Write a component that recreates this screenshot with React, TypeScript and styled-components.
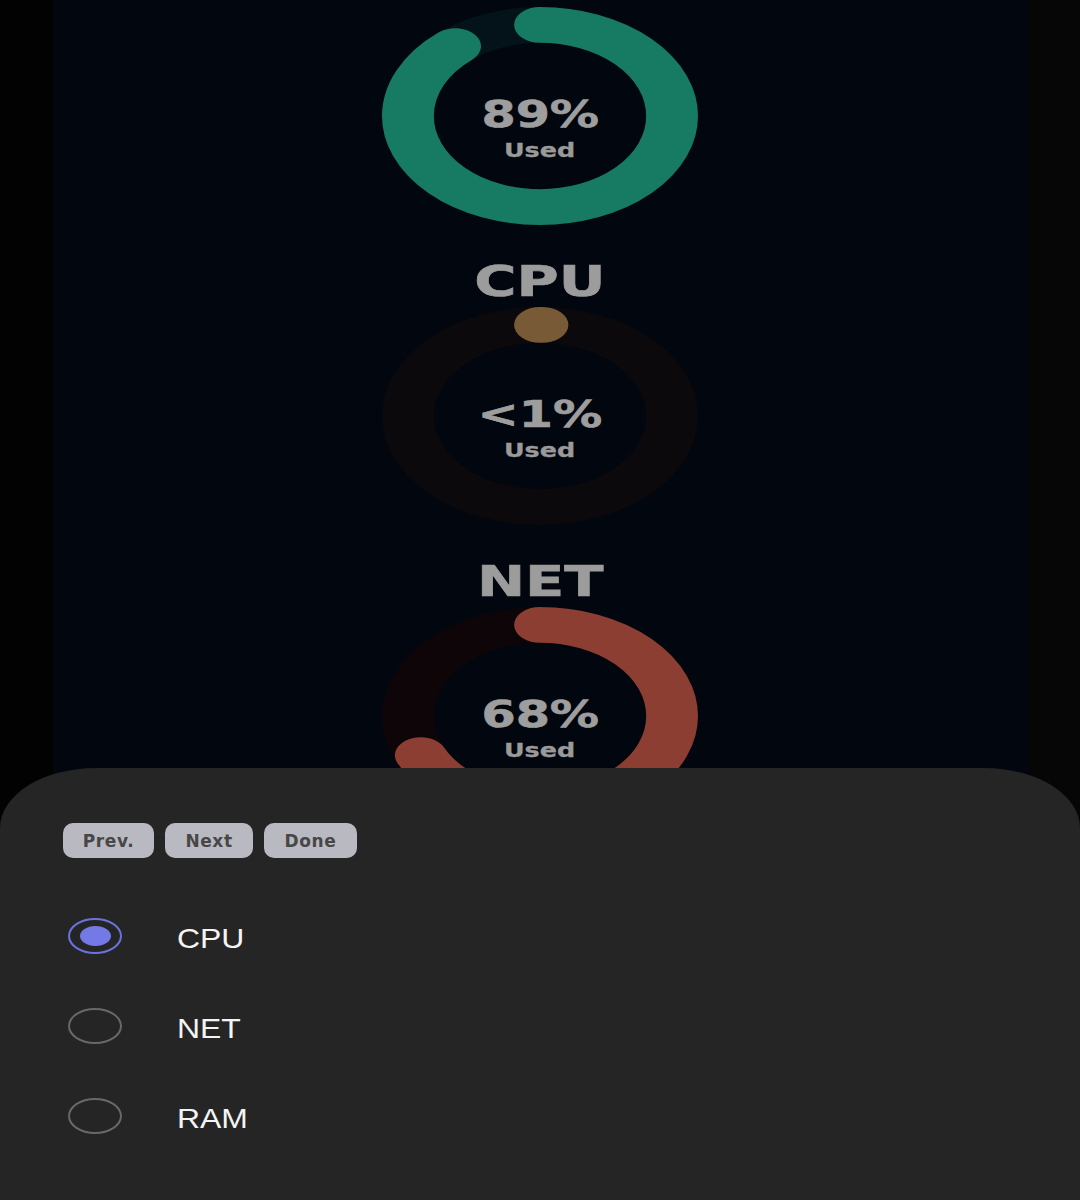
import React from 'react';
import styled, { createGlobalStyle } from 'styled-components';

const GlobalStyle = createGlobalStyle`
  html, body {
    margin: 0;
    padding: 0;
    background: #020202;
    font-family: "DejaVu Sans", "Liberation Sans", sans-serif;
  }
`;

const Screen = styled.div`
  position: relative;
  display: flex;
  width: 1080px;
  height: 1200px;
  overflow: hidden;
`;

const Strip = styled.div<{ tone: string }>`
  width: 53px;
  flex-shrink: 0;
  background: ${p => p.tone};
`;

const Panel = styled.main`
  flex: 1;
  background: #02070f;
  overflow: hidden;
`;

const List = styled.div`
  display: flex;
  flex-direction: column;
  align-items: center;
  padding-top: 7px;
`;

const Section = styled.section`
  display: flex;
  flex-direction: column;
  align-items: center;
`;

const Heading = styled.h2`
  margin: 0;
  padding: 36px 0 4px;
  font-size: 42px;
  line-height: 42px;
  font-weight: 700;
  color: #9c9c9c;
  -webkit-text-stroke: 0.6px #9c9c9c;
  transform: scaleX(1.37);
`;

const Donut = styled.div`
  display: grid;
  width: 316px;
  height: 218px;

  & > * {
    grid-area: 1 / 1;
  }

  svg {
    width: 100%;
    height: 100%;
  }
`;

const Center = styled.div`
  display: flex;
  flex-direction: column;
  align-items: center;
  justify-content: center;
  padding-top: 24px;
`;

const Value = styled.div`
  font-size: 37px;
  line-height: 40px;
  font-weight: 700;
  color: #9e9e9e;
  -webkit-text-stroke: 0.6px #9e9e9e;
  transform: scaleX(1.33);
`;

const Caption = styled.div`
  margin-top: 4px;
  font-size: 19px;
  line-height: 22px;
  font-weight: 700;
  color: #9a9a9a;
  -webkit-text-stroke: 0.3px #9a9a9a;
  transform: scaleX(1.34);
`;

const Sheet = styled.div`
  position: absolute;
  left: 0;
  right: 0;
  bottom: 0;
  height: 432px;
  background: #252525;
  border-radius: 96px 96px 0 0 / 60px 60px 0 0;
  padding: 55px 0 0 63px;
  box-sizing: border-box;
`;

const Toolbar = styled.div`
  display: flex;
  gap: 11px;
`;

const ToolButton = styled.button<{ w: number }>`
  width: ${p => p.w}px;
  height: 35px;
  border: none;
  border-radius: 10px;
  background: #b9b9c1;
  color: #474747;
  font-family: "DejaVu Sans", sans-serif;
  font-size: 17px;
  font-weight: 700;
  letter-spacing: 0.6px;
  padding: 0;
`;

const Options = styled.div`
  display: flex;
  flex-direction: column;
  margin-top: 33px;
`;

const Option = styled.label`
  display: flex;
  align-items: center;
  height: 90px;
  padding-left: 5px;
`;

const Radio = styled.span<{ checked?: boolean }>`
  display: flex;
  align-items: center;
  justify-content: center;
  width: 54px;
  height: 36px;
  box-sizing: border-box;
  border-radius: 50%;
  border: 2px solid ${p => (p.checked ? '#6b72de' : '#686868')};

  &::after {
    content: '';
    display: ${p => (p.checked ? 'block' : 'none')};
    width: 31px;
    height: 20px;
    border-radius: 50%;
    background: #7479e8;
  }
`;

const OptionText = styled.span`
  margin-left: 55px;
  padding-top: 5px;
  font-family: "Liberation Sans", Arial, sans-serif;
  font-size: 28px;
  color: #f4f4f4;
  transform: scaleX(1.14);
  transform-origin: left center;
`;

interface RingProps {
  value: number;
  color: string;
  track: string;
}

const Ring: React.FC<RingProps> = ({ value, color, track }) => (
  <svg viewBox="0 0 100 100" preserveAspectRatio="none">
    <circle cx="50" cy="50" r="41.8" fill="none" stroke={track} strokeWidth="16.4" />
    <circle
      cx="50"
      cy="50"
      r="41.8"
      fill="none"
      stroke={color}
      strokeWidth="16.4"
      strokeLinecap="round"
      pathLength={100}
      strokeDasharray={`${value} 100`}
      transform="rotate(-90 50 50)"
    />
  </svg>
);

const gauges = [
  { name: 'RAM', label: '89%', value: 89, color: '#177a62', track: '#04131a' },
  { name: 'CPU', label: '<1%', value: 0.3, color: '#785a36', track: '#0b090b' },
  { name: 'NET', label: '68%', value: 68, color: '#8b3e31', track: '#0e0509' },
];

const App: React.FC = () => {
  return (
    <>
      <GlobalStyle />
      <Screen>
        <Strip tone="#020202" />
        <Panel>
          <List>
            {gauges.map((g, i) => (
              <Section key={g.name}>
                {i > 0 && <Heading>{g.name}</Heading>}
                <Donut>
                  <Ring value={g.value} color={g.color} track={g.track} />
                  <Center>
                    <Value>{g.label}</Value>
                    <Caption>Used</Caption>
                  </Center>
                </Donut>
              </Section>
            ))}
          </List>
        </Panel>
        <Strip tone="#060606" />
        <Sheet>
          <Toolbar>
            <ToolButton w={91}>Prev.</ToolButton>
            <ToolButton w={88}>Next</ToolButton>
            <ToolButton w={93}>Done</ToolButton>
          </Toolbar>
          <Options>
            <Option>
              <Radio checked />
              <OptionText>CPU</OptionText>
            </Option>
            <Option>
              <Radio />
              <OptionText>NET</OptionText>
            </Option>
            <Option>
              <Radio />
              <OptionText>RAM</OptionText>
            </Option>
          </Options>
        </Sheet>
      </Screen>
    </>
  );
};

export default App;
